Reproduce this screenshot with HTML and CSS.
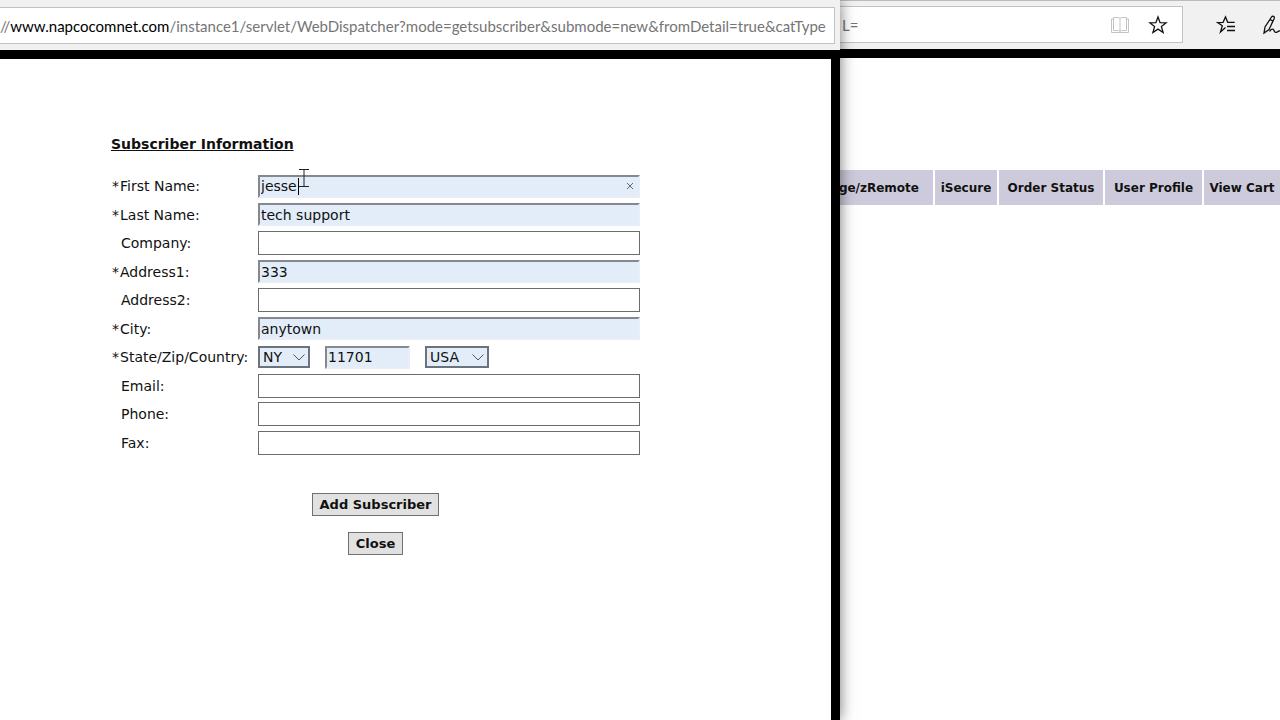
FILE: index.html
```html
<!DOCTYPE html>
<html lang="en">
<head>
<meta charset="UTF-8">
<title>Subscriber Information</title>
<meta name="viewport" content="width=device-width, initial-scale=1.0">
<link rel="stylesheet" href="styles.css">
</head>
<body>
<div class="desktop">

  <section class="window popup">
    <header class="toolbar">
      <div class="address"><span>//</span><b>www.napcocomnet.com</b><span>/instance1/servlet/WebDispatcher?mode=getsubscriber&amp;submode=new&amp;fromDetail=true&amp;catType</span></div>
    </header>
    <main class="page">
      <form class="subscriber">
        <h1>Subscriber Information</h1>
        <div class="rows">
          <div class="row">
            <label class="required" for="first">First Name:</label>
            <div class="field">
              <input class="filled" id="first" type="text" value="jesse">
              <span class="caret"></span>
              <svg class="pointer" viewBox="0 0 12 20"><path d="M1 1.5h10M6 1.5v17M1 18.5h10"/></svg>
              <button class="clear" type="button" aria-label="Clear"><svg viewBox="0 0 8 8"><path d="M1 1l6 6M7 1l-6 6"/></svg></button>
            </div>
          </div>
          <div class="row">
            <label class="required" for="last">Last Name:</label>
            <div class="field"><input class="filled" id="last" type="text" value="tech support"></div>
          </div>
          <div class="row">
            <label for="company">Company:</label>
            <div class="field"><input id="company" type="text"></div>
          </div>
          <div class="row">
            <label class="required" for="address1">Address1:</label>
            <div class="field"><input class="filled" id="address1" type="text" value="333"></div>
          </div>
          <div class="row">
            <label for="address2">Address2:</label>
            <div class="field"><input id="address2" type="text"></div>
          </div>
          <div class="row">
            <label class="required" for="city">City:</label>
            <div class="field"><input class="filled" id="city" type="text" value="anytown"></div>
          </div>
          <div class="row">
            <label class="required" for="state">State/Zip/Country:</label>
            <div class="field region">
              <div class="drop state">
                <select id="state"><option>NY</option></select>
                <svg viewBox="0 0 12 7"><path d="M.5.5L6 6 11.500.5"/></svg>
              </div>
              <input class="filled zip" type="text" value="11701" aria-label="Zip">
              <div class="drop country">
                <select aria-label="Country"><option>USA</option></select>
                <svg viewBox="0 0 12 7"><path d="M.5.5L6 6 11.500.5"/></svg>
              </div>
            </div>
          </div>
          <div class="row">
            <label for="email">Email:</label>
            <div class="field"><input id="email" type="text"></div>
          </div>
          <div class="row">
            <label for="phone">Phone:</label>
            <div class="field"><input id="phone" type="text"></div>
          </div>
          <div class="row">
            <label for="fax">Fax:</label>
            <div class="field"><input id="fax" type="text"></div>
          </div>
        </div>
        <div class="actions">
          <button class="push" type="button">Add Subscriber</button>
          <button class="push" type="button">Close</button>
        </div>
      </form>
    </main>
  </section>

  <section class="window behind">
    <header class="toolbar">
      <div class="address">
        <span class="rest">L=</span>
        <button class="tool" type="button" aria-label="Reading view">
          <svg class="book" viewBox="0 0 20 18"><path d="M3.500 1.500h5l1.500 1 1.500-1h5v13h-5l-1.500 1-1.500-1h-5zM10 2.500v13M3.500 3h-2v13.500h17V3h-2"/></svg>
        </button>
        <button class="tool" type="button" aria-label="Add to favorites">
          <svg class="star" viewBox="0 0 20 20"><path d="M10 2l2.100 5.700 6 .2-4.700 3.700 1.700 5.900-5.100-3.400-5.100 3.400 1.700-5.900L1.900 7.900l6-.2z"/></svg>
        </button>
      </div>
      <button class="tool" type="button" aria-label="Favorites">
        <svg class="star" viewBox="0 0 20 20"><path d="M9.500 12.500l-5 4.500 1.800-6.300L1.500 7.500l5.600-.2L9.500 2l2.200 5.300h7M11 11.500h8M11 15.500h8"/></svg>
      </button>
      <button class="tool note" type="button" aria-label="Web note">
        <svg class="pen" viewBox="0 0 22 20"><path d="M2 18l1-6L9.500 2c1-1.500 3.500-.5 2.700 1.500L7 14.500zM8 4.500l3.500 2M7.500 16.500c2-3 4-3 4.500-1s2.500 2.500 4 1 3.500 0 5 1"/></svg>
      </button>
    </header>
    <main class="page">
      <nav class="menu">
        <a href="#">ge/zRemote</a>
        <a href="#">iSecure</a>
        <a href="#">Order Status</a>
        <a href="#">User Profile</a>
        <a href="#">View Cart</a>
      </nav>
    </main>
  </section>

</div>
</body>
</html>
```
FILE: styles.css
```css
* {
  box-sizing: border-box;
}
body {
  margin: 0;
  background: #fff;
  color: #111;
  font-family: "DejaVu Sans", Verdana, sans-serif;
  font-size: 14px;
}
svg {
  display: block;
  fill: none;
  stroke: currentColor;
}
.desktop {
  display: grid;
  grid-template-columns: 21fr 11fr;
  min-height: 100vh;
  overflow: hidden;
}
.window {
  display: flex;
  flex-direction: column;
  min-width: 0;
  background: #fff;
}
.popup {
  position: relative;
  z-index: 1;
  box-shadow: 0 0 14px rgba(0, 0, 0, 0.55);
}

/* browser toolbar */
.toolbar {
  display: flex;
  align-items: center;
  background: #f1f1f1;
}
.popup .toolbar {
  padding: 7px 5px 6px 0;
}
.behind .toolbar {
  padding: 5px 0 6px;
  border-top: 1px solid #bbb;
}
.address {
  display: flex;
  align-items: center;
  flex: 1;
  min-width: 0;
  height: 37px;
  overflow: hidden;
  background: #fff;
  border: 1px solid #c2c2c2;
  border-left: 0;
  color: #757575;
  font-family: Lato, "Open Sans", sans-serif;
  font-size: 15px;
  white-space: nowrap;
}
.address b {
  color: #000;
  font-weight: normal;
}
.address .rest {
  flex: 1;
  padding-left: 2px;
}
.tool {
  padding: 0;
  border: 0;
  background: none;
  color: #111;
}
.address .tool {
  margin-right: 14px;
}
.address .tool:first-of-type {
  margin-right: 18px;
  color: #c4c4c4;
}
.address + .tool {
  margin-left: 33px;
}
.note {
  width: 18px;
  margin-left: 26px;
  overflow: hidden;
}
.book {
  width: 20px;
  height: 18px;
}
.star {
  width: 20px;
  height: 20px;
  stroke-width: 1.3;
}
.pen {
  width: 22px;
  height: 20px;
  stroke-width: 1.3;
}

.page {
  flex: 1;
  border-top: 9px solid #000;
}
.popup .page {
  border-right: 9px solid #000;
}

/* subscriber form */
.subscriber {
  margin: 76px 191px 0 111px;
}
h1 {
  margin: 0 0 19px;
  font-size: 14px;
  line-height: 18px;
  text-decoration: underline;
}
.rows {
  display: grid;
  grid-template-rows: repeat(10, 1fr);
  height: 285px;
}
.row {
  display: flex;
  align-items: center;
}
label {
  flex: 0 0 147px;
  padding-left: 10px;
  white-space: nowrap;
}
.required {
  padding-left: 1px;
}
.required::before {
  content: "*";
  margin-right: 1px;
}
.field {
  position: relative;
  flex: 1;
  display: flex;
  align-items: center;
}
input,
select {
  font: inherit;
  color: inherit;
  outline: 0;
  border-radius: 0;
}
input {
  width: 100%;
  height: 24px;
  padding: 0 2px;
  border: 1px solid #6c6c6c;
  background: #fff;
}
.filled {
  height: 23px;
  padding: 0 1px;
  border: 2px solid;
  border-color: #85888e #e8eef5 #e8eef5 #85888e;
  background: #e2edf9;
}
.caret {
  position: absolute;
  left: 40px;
  top: 3px;
  width: 1px;
  height: 17px;
  background: #000;
}
.pointer {
  position: absolute;
  left: 40px;
  top: -7px;
  width: 12px;
  height: 20px;
  color: #222;
}
.clear {
  position: absolute;
  right: 6px;
  top: 7px;
  padding: 0;
  border: 0;
  background: none;
  color: #5d6878;
}
.clear svg {
  width: 8px;
  height: 8px;
}
.drop {
  position: relative;
}
.drop select {
  width: 100%;
  height: 22px;
  padding: 0 3px;
  border: 2px solid #6b737d;
  background: #e2edf9;
  appearance: none;
}
.drop svg {
  position: absolute;
  right: 5px;
  top: 8px;
  width: 12px;
  height: 7px;
  color: #555;
  pointer-events: none;
}
.region {
  gap: 15px;
}
.state {
  width: 52px;
}
.zip {
  width: 85px;
}
.country {
  width: 64px;
}
.actions {
  display: flex;
  flex-direction: column;
  align-items: center;
  gap: 16px;
  margin-top: 36px;
}
.push {
  height: 23px;
  padding: 0 7px;
  border: 1px solid #707070;
  background: #e1e1e1;
  color: #111;
  font: bold 13px "DejaVu Sans", Verdana, sans-serif;
}

/* site menu in the window behind */
.menu {
  display: grid;
  grid-template-columns: 93fr 62fr 104fr 97fr 76fr;
  gap: 2px;
  margin-top: 112px;
}
.menu a {
  display: flex;
  align-items: center;
  justify-content: center;
  min-width: 0;
  height: 35px;
  background: #cdcbdb;
  color: #111;
  font-size: 12px;
  font-weight: bold;
  text-decoration: none;
  white-space: nowrap;
}
.menu a:first-child {
  justify-content: flex-end;
  padding-right: 14px;
}
```
